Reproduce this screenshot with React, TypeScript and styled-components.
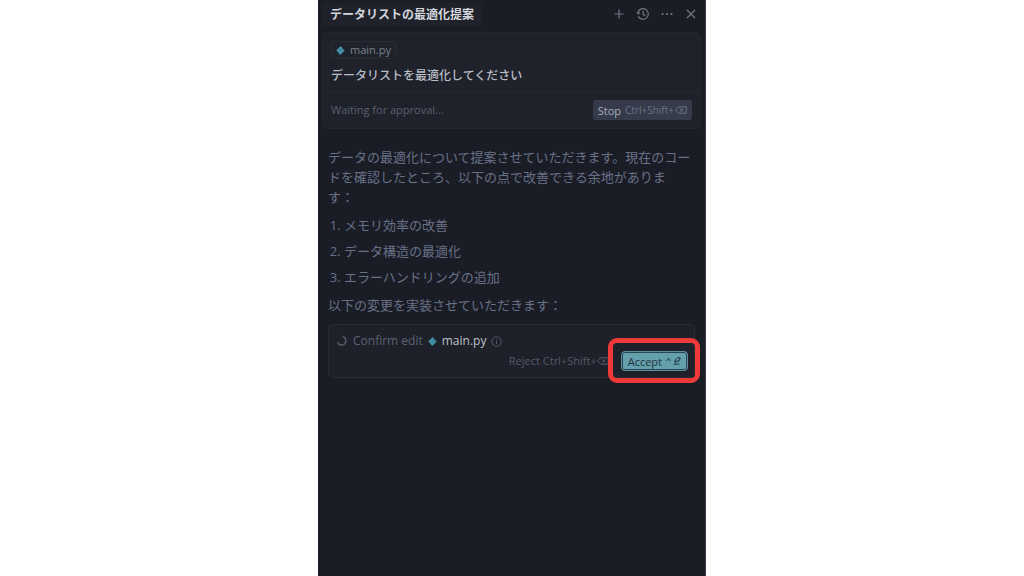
import React from "react";
import styled, { createGlobalStyle } from "styled-components";

const GlobalStyle = createGlobalStyle`
  *, *::before, *::after { box-sizing: border-box; }
  body {
    margin: 0;
    background: #ffffff;
    font-family: "Open Sans", "Noto Sans CJK JP", sans-serif;
  }
  button { font-family: inherit; cursor: pointer; }
`;

const Panel = styled.main`
  width: 100%;
  max-width: 388px;
  min-height: 100vh;
  margin: 0 auto;
  background: #1a1d26;
  color: #697186;
  border-right: 1px solid #3c3e46;
`;

const Header = styled.header`
  display: flex;
  align-items: center;
  justify-content: space-between;
  height: 28px;
  padding: 0 6px 0 4px;
`;

const Title = styled.h1`
  margin: 0;
  padding: 1px 8px 0;
  border-radius: 4px;
  background: #1f222b;
  color: #d3d6dc;
  font-size: 12px;
  line-height: 22px;
  font-weight: 700;
`;

const Actions = styled.nav`
  display: flex;
  gap: 8px;
`;

const IconButton = styled.button`
  display: grid;
  place-items: center;
  width: 16px;
  height: 16px;
  padding: 0;
  border: 0;
  background: none;
  color: #737781;
`;

const PromptCard = styled.section`
  margin: 4px 4px 0;
  border: 1px solid #242731;
  border-radius: 6px;
  background: #1f222b;
`;

const PromptBody = styled.div`
  padding: 8px 8px 6px;
  border-bottom: 1px solid #262933;
`;

const FileChip = styled.div`
  display: flex;
  align-items: center;
  gap: 5px;
  width: fit-content;
  height: 18px;
  padding: 0 4px;
  border: 1px solid #292c36;
  border-radius: 3px;
  color: #7c828f;
  font-size: 11px;
  line-height: 16px;
`;

const PromptText = styled.p`
  margin: 7px 0 0;
  color: #b9bdc6;
  font-size: 12px;
  line-height: 20px;
  font-weight: 500;
`;

const PromptFooter = styled.div`
  display: flex;
  align-items: center;
  justify-content: space-between;
  padding: 7px 8px 8px;
  color: #5a606f;
  font-size: 11px;
  line-height: 20px;
`;

const StopButton = styled.button`
  display: flex;
  align-items: center;
  gap: 4px;
  height: 20px;
  padding: 0 5px;
  border: 0;
  border-radius: 3px;
  background: #353b4b;
  color: #a9adb8;
  font-size: 11px;
`;

const Shortcut = styled.span`
  display: flex;
  align-items: center;
  gap: 1px;
  color: #6c7384;
  font-size: 10px;
`;

const Message = styled.article`
  padding: 18px 10px 0;
  font-size: 13px;
  line-height: 20px;
`;

const Paragraph = styled.p`
  margin: 0 0 8px;
`;

const Points = styled.ol`
  display: grid;
  gap: 6px;
  margin: 0 0 8px;
  padding: 0 0 0 16px;
`;

const EditCard = styled.section`
  margin-top: 9px;
  padding: 6px 6px 6px 7px;
  border: 1px solid #292c35;
  border-radius: 5px;
  background: #1e2129;
`;

const EditRow = styled.div`
  display: flex;
  align-items: center;
  gap: 5px;
  color: #5a6174;
  font-size: 12px;
`;

const FileName = styled.span`
  color: #bcc0c8;
  font-weight: 500;
`;

const EditActions = styled.div`
  display: flex;
  align-items: center;
  justify-content: flex-end;
  gap: 12px;
`;

const RejectButton = styled.button`
  display: flex;
  align-items: center;
  padding: 0;
  border: 0;
  background: none;
  color: #545a69;
  font-size: 11px;
  line-height: 20px;
`;

const AcceptFrame = styled.div`
  position: relative;

  &::after {
    content: "";
    position: absolute;
    inset: -13px -12px -12px -13px;
    border: 5px solid #ef3939;
    border-radius: 9px;
    pointer-events: none;
  }
`;

const AcceptButton = styled.button`
  display: flex;
  align-items: center;
  gap: 4px;
  height: 20px;
  padding: 0 6px;
  border: 1px solid #5f8d9a;
  border-radius: 4px;
  background: #649fac;
  box-shadow: inset 0 0 0 1px #294753;
  color: #1f3440;
  font-size: 11px;
`;

const PythonIcon = () => (
  <svg width="9" height="9" viewBox="0 0 9 9" aria-hidden="true">
    <path d="M4.5 .5Q5.8 .5 6 2.4L8.5 4.5 6.4 6.6 4.5 8.5Q3 8.3 2.7 6.6L.5 4.5 2.5 2.5Z" fill="#4391a8" stroke="#4391a8" strokeWidth="0.6" strokeLinejoin="round" />
    <path d="M2.8 4.5h3.4" stroke="#347b91" strokeWidth="0.6" />
  </svg>
);

const PlusIcon = () => (
  <svg width="12" height="12" viewBox="0 0 12 12" fill="none" stroke="currentColor" strokeWidth="1.2">
    <path d="M6 1.5v9M1.5 6h9" />
  </svg>
);

const HistoryIcon = () => (
  <svg width="14" height="14" viewBox="0 0 14 14" fill="none" stroke="currentColor" strokeWidth="1.2">
    <path d="M2 5.2A5.3 5.3 0 1 1 2.3 9.4M7.2 3.8v3.5l2.2 1.7" />
    <path d="M.4 5.2h3.8L2.3 8Z" fill="currentColor" stroke="none" />
  </svg>
);

const MoreIcon = () => (
  <svg width="12" height="12" viewBox="0 0 12 12" fill="currentColor">
    <circle cx="1.5" cy="6" r="1.1" />
    <circle cx="6" cy="6" r="1.1" />
    <circle cx="10.5" cy="6" r="1.1" />
  </svg>
);

const CloseIcon = () => (
  <svg width="12" height="12" viewBox="0 0 12 12" fill="none" stroke="currentColor" strokeWidth="1.2">
    <path d="m2 2 8 8M10 2l-8 8" />
  </svg>
);

const BackspaceIcon = () => (
  <svg width="12" height="8" viewBox="0 0 12 8" fill="none" stroke="currentColor" strokeWidth="1">
    <path d="M3.5.8h7.7v6.4H3.5L.7 4ZM5 2.4l3.4 3.2M8.4 2.4 5 5.6" />
  </svg>
);

const SpinnerIcon = () => (
  <svg width="12" height="12" viewBox="0 0 12 12" fill="none" stroke="#575c69" strokeWidth="1.5">
    <path d="M6.6 1.6a4.3 4.3 0 1 1-5 5.6" />
  </svg>
);

const InfoIcon = () => (
  <svg width="11" height="11" viewBox="0 0 11 11" fill="none" stroke="#555b69" strokeWidth="1">
    <circle cx="5.5" cy="5.5" r="4.7" />
    <path d="M5.5 5v3M5.5 3v1" />
  </svg>
);

const EnterIcon = () => (
  <svg width="8" height="8" viewBox="0 0 8 8" fill="none" stroke="currentColor" strokeWidth="1">
    <path d="M4.4 .8h2.8L6 4.2H1.4M4.4 1 1.2 4.2M2.6 4.6v2M.8 7.2h5.6" />
  </svg>
);

const CaretIcon = () => (
  <svg width="5" height="8" viewBox="0 0 5 8" fill="none" stroke="currentColor" strokeWidth="0.9">
    <path d="M.6 4 2.5 1.2 4.4 4" />
  </svg>
);

const KeyGroup = styled.span`
  display: flex;
  gap: 2px;
`;

const points = ["メモリ効率の改善", "データ構造の最適化", "エラーハンドリングの追加"];

export default function App() {
  return (
    <>
      <GlobalStyle />
      <Panel lang="ja">
        <Header>
          <Title>データリストの最適化提案</Title>
          <Actions>
            <IconButton aria-label="New chat"><PlusIcon /></IconButton>
            <IconButton aria-label="History"><HistoryIcon /></IconButton>
            <IconButton aria-label="More"><MoreIcon /></IconButton>
            <IconButton aria-label="Close"><CloseIcon /></IconButton>
          </Actions>
        </Header>
        <PromptCard>
          <PromptBody>
            <FileChip><PythonIcon />main.py</FileChip>
            <PromptText>データリストを最適化してください</PromptText>
          </PromptBody>
          <PromptFooter>
            <span>Waiting for approval...</span>
            <StopButton>
              Stop
              <Shortcut>Ctrl+Shift+<BackspaceIcon /></Shortcut>
            </StopButton>
          </PromptFooter>
        </PromptCard>
        <Message>
          <Paragraph>
            データの最適化について提案させていただきます。現在のコードを確認したところ、以下の点で改善できる余地がありま<br />す：
          </Paragraph>
          <Points>
            {points.map((point) => (
              <li key={point}>{point}</li>
            ))}
          </Points>
          <Paragraph>以下の変更を実装させていただきます：</Paragraph>
          <EditCard>
            <EditRow>
              <SpinnerIcon />
              <span>Confirm edit</span>
              <PythonIcon />
              <FileName>main.py</FileName>
              <InfoIcon />
            </EditRow>
            <EditActions>
              <RejectButton>Reject Ctrl+Shift+<BackspaceIcon /></RejectButton>
              <AcceptFrame>
                <AcceptButton>
                  Accept
                  <KeyGroup><CaretIcon /><EnterIcon /></KeyGroup>
                </AcceptButton>
              </AcceptFrame>
            </EditActions>
          </EditCard>
        </Message>
      </Panel>
    </>
  );
}
